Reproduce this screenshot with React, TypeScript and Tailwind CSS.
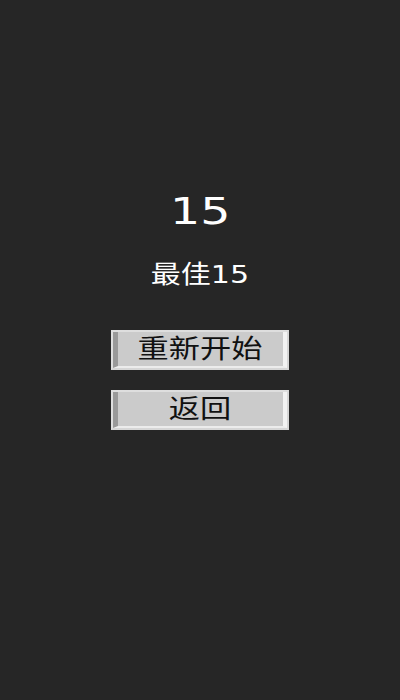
import React from 'react';

const font = { fontFamily: '"DejaVu Sans", "Noto Sans CJK SC", sans-serif' };

function BevelButton({ label }: { label: string }) {
  return (
    <button
      className="w-[178px] h-[40px] border-2 border-t-[#dedede] border-l-[#dedede] border-r-[#d6d6d6] border-b-[#d6d6d6] bg-[#cbcbcb] p-0"
      style={font}
    >
      <div className="h-full w-full border-l-[5px] border-l-[#999] border-r-[4px] border-r-[#f2f2f2] border-b-2 border-b-[#ececec] flex items-center justify-center">
        <span className="inline-block scale-x-[1.2] text-[26px] leading-none text-[#111]">{label}</span>
      </div>
    </button>
  );
}

export default function App() {
  return (
    <div className="w-[400px] h-[700px] bg-[#262626] flex flex-col items-center" style={font}>
      <div className="mt-[188px] scale-x-[1.25] text-[38px] leading-[46px] text-white">15</div>
      <div className="mt-[27px] scale-x-[1.2] text-[25px] leading-[28px] text-white">最佳15</div>
      <div className="mt-[41px] flex flex-col gap-[20px]">
        <BevelButton label="重新开始" />
        <BevelButton label="返回" />
      </div>
    </div>
  );
}
